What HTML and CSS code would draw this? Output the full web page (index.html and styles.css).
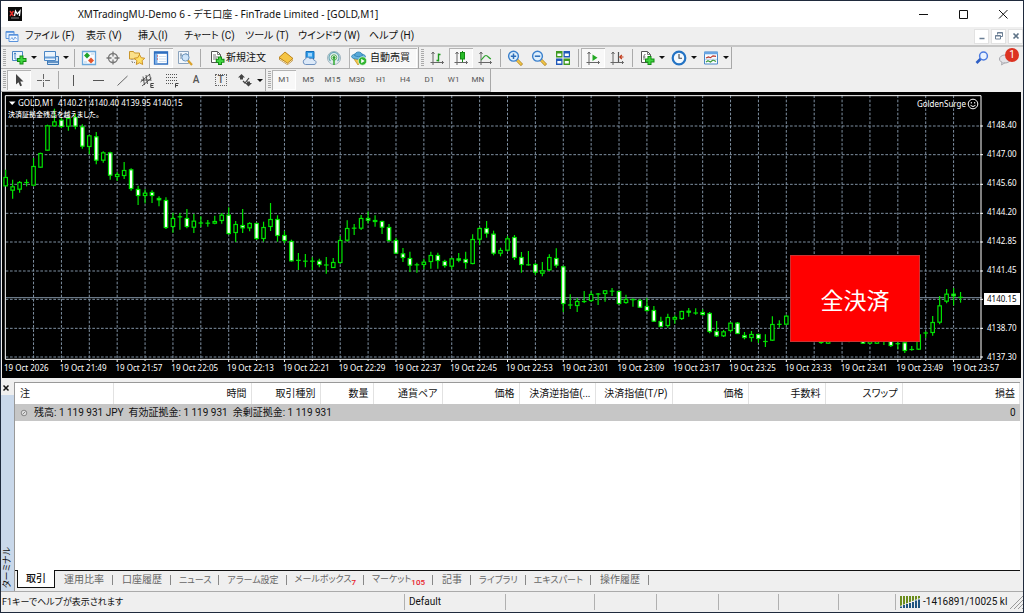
FILE: index.html
```html
<!DOCTYPE html>
<html lang="ja">
<head>
<meta charset="utf-8">
<title>XMTradingMU-Demo 6 - デモ口座 - FinTrade Limited - [GOLD,M1]</title>
<link rel="stylesheet" href="styles.css">
</head>
<body>
<div class="window">
  <header class="titlebar">
    <svg class="app-icon" viewBox="0 0 14 14"><rect width="14" height="14" fill="#0b0b0b"/><path d="M2 4l3.500 5M5.500 4L2 9" stroke="#e8302a" stroke-width="1.400"/><path d="M6.500 9l1-5 1.800 3L12 4l-.6 5" stroke="#fff" stroke-width="1.300" fill="none"/><path d="M3 11h8" stroke="#aaa" stroke-width=".8"/></svg>
    <h1 class="titlebar__text">XMTradingMU-Demo 6 - デモ口座 - FinTrade Limited - [GOLD,M1]</h1>
    <div class="caption">
      <button class="caption__btn" aria-label="最小化"><svg viewBox="0 0 12 12"><path d="M2 6.500h9" stroke="#111"/></svg></button>
      <button class="caption__btn" aria-label="最大化"><svg viewBox="0 0 12 12"><path d="M2.500 2.500h8v8h-8z" fill="none" stroke="#111"/></svg></button>
      <button class="caption__btn" aria-label="閉じる"><svg viewBox="0 0 12 12"><path d="M2 2l8.500 8.500M10.500 2L2 10.500" stroke="#111"/></svg></button>
    </div>
  </header>

  <nav class="menubar">
    <svg class="menubar__icon" viewBox="0 0 14 14"><path d="M1 2.500h8v7H1z" fill="#e4f0fd" stroke="#5a93dc"/><path d="M1 3h8" stroke="#5a93dc" stroke-width="1.600"/><path d="M4 5.500h9v7H4z" fill="#f4f9ff" stroke="#5a93dc"/><path d="M4 6h9" stroke="#5a93dc" stroke-width="1.400"/><path d="M5.500 10.500l1.500-2 1.500 2.500 1.500-3 1.500 2" fill="none" stroke="#5a93dc" stroke-width=".8"/></svg>
    <div class="menubar__items">
      <button class="menu">ファイル (F)</button><button class="menu">表示 (V)</button><button class="menu">挿入(I)</button><button class="menu">チャート (C)</button><button class="menu">ツール (T)</button><button class="menu">ウインドウ (W)</button><button class="menu">ヘルプ (H)</button>
    </div>
    <div class="mdi">
      <button class="mdi__btn" aria-label="チャートを最小化"><svg viewBox="0 0 10 10"><path d="M2.500 7.500h5" stroke="#6b7f95" stroke-width="1.500"/></svg></button>
      <button class="mdi__btn" aria-label="チャートを元に戻す"><svg viewBox="0 0 10 10"><path d="M3.500 3.500v-2h5v4h-2M3.500 2h5" fill="none" stroke="#6b7f95"/><path d="M1.500 4.500h5v3.500h-5zM1.500 5h5" fill="none" stroke="#6b7f95"/></svg></button>
      <button class="mdi__btn" aria-label="チャートを閉じる"><svg viewBox="0 0 10 10"><path d="M2.500 2.500l5 5M7.500 2.500l-5 5" stroke="#5d7286" stroke-width="1.600"/></svg></button>
    </div>
  </nav>

  <div class="toolbar">
    <div class="bar">
      <i class="grip"></i>
      <button class="tool tool--menu" aria-label="新規チャート"><svg viewBox="0 0 16 16"><path d="M1.500 1.500h10v9h-10z" fill="#eef6fe" stroke="#4a86c5"/><path d="M4 3v6h6M3 4.200l1-1.400 1 1.400" fill="none" stroke="#4a86c5"/><path d="M10.500 5.500v9M6 10h9.500" stroke="#128a12" stroke-width="4"/><path d="M10.500 6.500v7M7 10h7.500" stroke="#3fd43f" stroke-width="2.200"/></svg></button>
      <button class="tool tool--menu" aria-label="プロファイル"><svg viewBox="0 0 16 16"><path d="M4.500 6.500h11v8h-11z" fill="#cfe2f5" stroke="#3f78b5"/><path d="M4 12h11" stroke="#3f78b5" stroke-width="1.500"/><path d="M1.500 1.500h11v9h-11z" fill="#eaf4fd" stroke="#4a86c5"/><path d="M2 7.500h10" stroke="#6aa0d8" stroke-width="2"/></svg></button>
      <i class="sep"></i>
      <button class="tool" aria-label="気配値表示"><svg viewBox="0 0 16 16"><path d="M1.500 1.500h13v13h-13z" fill="#f7fbff" stroke="#6aa8dc" stroke-width="1.300"/><path d="M6 2.500l3 3-3 3-3-3z" fill="#1fa32a"/><path d="M10 7.500l3 3-3 3-3-3z" fill="#e4552b"/><path d="M10 4h3M3 12h3" stroke="#b9cde0"/></svg></button>
      <button class="tool" aria-label="データウィンドウ"><svg viewBox="0 0 16 16"><circle cx="8" cy="8" r="4.500" fill="none" stroke="#777" stroke-width="1.300"/><path d="M8 1.500v5M8 9.500v5M1.500 8h5M9.500 8h5" stroke="#777" stroke-width="1.300"/></svg></button>
      <button class="tool" aria-label="ナビゲーター"><svg viewBox="0 0 16 16"><path d="M.5 3V1.500h4L5.500 3h5v6H.5z" fill="#fbe08a" stroke="#c9962c"/><path d="M3 9v4M3 12.500h5" stroke="#888" stroke-dasharray="1 1"/><path d="M10.500 4.500l1.700 3.200 3.500.5-2.600 2.600.6 3.700-3.200-1.700-3.200 1.700.6-3.700L5.300 8.200l3.500-.5z" fill="#ffe066" stroke="#c98a1c" stroke-width=".9"/></svg></button>
      <button class="tool tool--on" aria-label="ターミナル"><svg viewBox="0 0 16 16"><path d="M1.500 2h13v12h-13z" fill="#fff" stroke="#2f6fc0" stroke-width="1.300"/><path d="M1 2.800h14" stroke="#2f6fc0" stroke-width="2"/><path d="M3.200 4v9.500" stroke="#7db0e8" stroke-width="2.600"/><path d="M6 6.500h7M6 9h7M6 11.500h7" stroke="#cfe0f2"/><path d="M4 6h1M4 9h1" stroke="#d33"/></svg></button>
      <button class="tool" aria-label="ストラテジーテスター"><svg viewBox="0 0 16 16"><path d="M1.500 1.500h10v12h-10z" fill="#f2f7fc" stroke="#8aa3bd"/><path d="M4 3v6M3 5h2M9 3v3" stroke="#7c93aa"/><circle cx="8.500" cy="7.500" r="3.600" fill="#c9e2f8" fill-opacity=".85" stroke="#6d96bf"/><path d="M11 10.500l4 4.500" stroke="#d9a12c" stroke-width="2.200"/></svg></button>
      <i class="sep"></i>
      <button class="tool tool--order"><svg viewBox="0 0 16 16"><path d="M2.500 1.500h6l3 3v8h-9z" fill="#fff" stroke="#555"/><path d="M8.500 1.500v3h3M4 5h3M4 7h5M4 9h4" fill="none" stroke="#777"/><path d="M11 6.500v8.500M6.800 10.800h8.700" stroke="#128a12" stroke-width="4"/><path d="M11 7.500v6.500M7.800 10.800h6.700" stroke="#3fd43f" stroke-width="2.200"/></svg>新規注文</button>
      <button class="tool" aria-label="MetaEditor"><svg viewBox="0 0 16 16"><path d="M1 7.500l6-5.500 8 6.500v2L9.500 15 1 9.500z" fill="#a86f10"/><path d="M1 7.500l6-5.500 8 6.500-5.500 4.700z" fill="#f5c545" stroke="#b57c16" stroke-width=".8"/><path d="M1.500 9l8 5 5.500-4.500" fill="none" stroke="#fff3c9" stroke-width=".9"/></svg></button>
      <button class="tool" aria-label="マーケット"><svg viewBox="0 0 16 16"><path d="M4 1.500h8v7H4z" fill="#2f9be6" stroke="#1770bd"/><path d="M6 3h4v3.500H6z" fill="#9fd6ff"/><path d="M3.500 14.500a2.700 2.700 0 0 1-.2-5.300C4 7 7 7 8 8.800c1.500-.9 3.500-.3 3.800 1.300 3 .2 3 4.400.2 4.400z" fill="#dce9f8" stroke="#6d91bf"/></svg></button>
      <button class="tool" aria-label="シグナル"><svg viewBox="0 0 16 16"><circle cx="8" cy="8" r="6.500" fill="#e2ecef" stroke="#9fb4bf"/><path d="M4.500 11a5 5 0 1 1 7 0" fill="none" stroke="#6aa8b5" stroke-width="1.200"/><circle cx="8" cy="7.500" r="2.700" fill="#fff" stroke="#55ad55"/><circle cx="8" cy="7.500" r="1.500" fill="#2d9c2d"/><path d="M8 8v7" stroke="#3daf3d" stroke-width="1.600"/></svg></button>
      <button class="tool tool--auto tool--on"><svg viewBox="0 0 16 16"><path d="M2 7.500l5 7.500 6-7.500z" fill="#f3c64c" stroke="#bb8b1f" stroke-width=".7"/><ellipse cx="7.500" cy="6.500" rx="7" ry="2.800" fill="#67b4e0" stroke="#2f7fae" stroke-width=".8"/><path d="M3.500 5.500C4 .8 11 .8 11.500 5.500c-2 1.500-6 1.500-8 0z" fill="#57a8d8" stroke="#2f7fae" stroke-width=".8"/><circle cx="11.500" cy="11" r="4.200" fill="#31b531" stroke="#fff" stroke-width=".6"/><path d="M10.200 8.800l3.500 2.200-3.500 2.200z" fill="#fff"/></svg>自動売買</button>
    </div>
    <div class="bar">
      <i class="grip"></i>
      <button class="tool" aria-label="バーチャート"><svg viewBox="0 0 16 16"><path d="M4 2v13M1.500 12.500h13M2.500 4L4 2l1.500 2M13 11l1.500 1.500L13 14" fill="none" stroke="#666"/><path d="M9.500 3.500v8M7.500 10.500h2M9.500 4.500h2" stroke="#1d9a1d" stroke-width="1.400"/></svg></button>
      <button class="tool tool--on" aria-label="ローソク足"><svg viewBox="0 0 16 16"><path d="M4 2v13M1.500 12.500h13M2.500 4L4 2l1.500 2M13 11l1.500 1.500L13 14" fill="none" stroke="#666"/><path d="M9.500 1v11" stroke="#158a15"/><rect x="7.500" y="2.500" width="4" height="6.500" fill="#27bb27" stroke="#158a15"/></svg></button>
      <button class="tool" aria-label="ラインチャート"><svg viewBox="0 0 16 16"><path d="M4 2v13M1.500 12.500h13M2.500 4L4 2l1.500 2M13 11l1.500 1.500L13 14" fill="none" stroke="#666"/><path d="M4 10c2-1 3-4.500 5-4.500s3 3 5 3.500" fill="none" stroke="#2fa32f" stroke-width="1.200"/></svg></button>
      <i class="sep"></i>
      <button class="tool" aria-label="ズームイン"><svg viewBox="0 0 16 16"><path d="M10 10l5 5" stroke="#a97818" stroke-width="3"/><path d="M10 10l4.600 4.600" stroke="#f0c648" stroke-width="1.800"/><circle cx="6.500" cy="6.200" r="4.900" fill="#dff0fd" stroke="#3b80cc" stroke-width="1.400"/><path d="M6.500 3.500v5.500M3.800 6.200h5.400" stroke="#2b6cb8" stroke-width="1.500"/></svg></button>
      <button class="tool" aria-label="ズームアウト"><svg viewBox="0 0 16 16"><path d="M10 10l5 5" stroke="#a97818" stroke-width="3"/><path d="M10 10l4.600 4.600" stroke="#f0c648" stroke-width="1.800"/><circle cx="6.500" cy="6.200" r="4.900" fill="#dff0fd" stroke="#3b80cc" stroke-width="1.400"/><path d="M3.800 6.200h5.400" stroke="#2b6cb8" stroke-width="1.500"/></svg></button>
      <button class="tool" aria-label="整列"><svg viewBox="0 0 16 16"><path d="M1 1h6.500v6.500H1zM8.500 8.500H15V15H8.500z" fill="#3e9a1f"/><path d="M8.500 1H15v6.500H8.500zM1 8.500h6.500V15H1z" fill="#2058b8"/><path d="M2.300 3.500h4V6h-4zM9.800 3.500h4V6h-4zM2.300 11h4v2.500h-4zM9.800 11h4v2.500h-4z" fill="#fff"/></svg></button>
      <i class="sep"></i>
      <button class="tool tool--on" aria-label="自動スクロール"><svg viewBox="0 0 16 16"><path d="M4 2v13M1.500 12.500h13M2.500 4L4 2l1.500 2M13 11l1.500 1.500L13 14" fill="none" stroke="#666"/><path d="M7.500 4.500l5 3.200-5 3.200z" fill="#22a822"/></svg></button>
      <button class="tool" aria-label="チャートシフト"><svg viewBox="0 0 16 16"><path d="M4 2v13M1.500 12.500h13M2.500 4L4 2l1.500 2M13 11l1.500 1.500L13 14" fill="none" stroke="#666"/><path d="M9.500 2v10" stroke="#555" stroke-width="1.200"/><path d="M14.500 7H11M12.800 5L10.800 7l2 2" fill="none" stroke="#c23a1a" stroke-width="1.200"/></svg></button>
      <i class="sep"></i>
      <button class="tool tool--menu" aria-label="インディケータ"><svg viewBox="0 0 16 16"><path d="M2.500 1.500h6l3 3v8h-9z" fill="#fff" stroke="#555"/><path d="M8.500 1.500v3h3M6.500 4.500q-1.500-.5-1.500 1.500v4M4 7h2.500" fill="none" stroke="#777"/><path d="M10.500 6v9M6 10.500h9.500" stroke="#128a12" stroke-width="4"/><path d="M10.500 7v7M7 10.500h7.500" stroke="#3fd43f" stroke-width="2.200"/></svg></button>
      <button class="tool tool--menu" aria-label="時間足設定"><svg viewBox="0 0 16 16"><circle cx="8" cy="8" r="6.300" fill="#f4faff" stroke="#2373c4" stroke-width="2.200"/><path d="M8 4v4.300h3" fill="none" stroke="#444" stroke-width="1.100"/></svg></button>
      <button class="tool tool--menu" aria-label="テンプレート"><svg viewBox="0 0 16 16"><path d="M1.500 2h13v12h-13z" fill="#f9fcff" stroke="#4a88c8"/><path d="M1 3h14" stroke="#69a5e2" stroke-width="2.500"/><path d="M3 8l2.500-1 2 .7L10 5.800l3 .5" fill="none" stroke="#b8362a" stroke-width="1.200"/><path d="M3 12l2-1.200L7.500 12l2.500-2 3 1.500" fill="none" stroke="#3c9a3c" stroke-width="1.200"/><path d="M2 9.300h12" stroke="#a9c4df" stroke-width=".8"/></svg></button>
    </div>
    <div class="toolbar__end">
      <button class="tool" aria-label="検索"><svg viewBox="0 0 16 16"><path d="M7 8.500L2.500 13" stroke="#2f5fc4" stroke-width="2.600"/><circle cx="9.500" cy="6" r="3.900" fill="#e9f2ff" stroke="#4c7be0" stroke-width="1.500"/></svg></button>
      <button class="tool tool--chat" aria-label="メッセージ"><svg viewBox="0 0 16 16"><ellipse cx="7" cy="9" rx="5.500" ry="4" fill="#e4e4e8" stroke="#a5a5ab"/><path d="M4 12l-.5 3 3.500-2.300" fill="#d5d5da" stroke="#a5a5ab" stroke-width=".8"/></svg><span class="badge">1</span></button>
    </div>
  </div>

  <div class="toolbar toolbar--draw">
    <div class="bar">
      <i class="grip"></i>
      <button class="tool tool--on" aria-label="カーソル"><svg viewBox="0 0 16 16"><path d="M5 2v10.500l2.500-2.300 1.700 4 1.800-.8-1.700-3.900h3.200z" fill="#444"/></svg></button>
      <button class="tool" aria-label="クロスヘア"><svg viewBox="0 0 16 16"><path d="M8.500 2v5M8.500 10v5M2 8.500h5M10 8.500h5M8 8.500h1" stroke="#666"/></svg></button>
      <i class="sep"></i>
      <div class="drawset">
        <button class="tool" aria-label="垂直線"><svg viewBox="0 0 16 16"><path d="M8.500 3v11" stroke="#555"/></svg></button>
        <button class="tool" aria-label="水平線"><svg viewBox="0 0 16 16"><path d="M3 8.500h11" stroke="#555"/></svg></button>
        <button class="tool" aria-label="トレンドライン"><svg viewBox="0 0 16 16"><path d="M3.500 13.500L13.500 4" stroke="#666"/></svg></button>
        <button class="tool" aria-label="チャネル"><svg viewBox="0 0 16 16"><path d="M1.500 10L11 2M3 14l9.500-8M4 4.500L5.500 13M7 3l1.500 9M10.500 2L12 9M2 8h9" stroke="#444" stroke-width=".9"/><path d="M14.800 11.500h-3v4h3M11.800 13.500h2.500" fill="none" stroke="#444"/></svg></button>
        <button class="tool" aria-label="フィボナッチ"><svg viewBox="0 0 16 16"><path d="M2 2.500h12M2 5.500h12M2 8.500h12M2 11.500h8" stroke="#555" stroke-dasharray="1 1"/><path d="M14.500 11.500h-3v4M11.500 13.500h2.500" fill="none" stroke="#444"/></svg></button>
        <button class="tool tool--letter" aria-label="テキスト">A</button>
        <button class="tool tool--letter" aria-label="ラベル"><span class="dotted">T</span></button>
      </div>
      <button class="tool tool--menu" aria-label="矢印"><svg viewBox="0 0 16 16"><path d="M1 5.500L4.500 2 8 5.500H6v2H3v-2z" fill="#444"/><path d="M6 9l2 2 4-5" fill="none" stroke="#444" stroke-width="1.200"/><path d="M15 11l-3.500 3.500L8 11h2V9.500h3V11z" fill="#444"/></svg></button>
    </div>
    <div class="bar bar--frames">
      <i class="grip"></i>
      <div class="frames">
        <button class="tool tool--on">M1</button><button class="tool">M5</button><button class="tool">M15</button><button class="tool">M30</button><button class="tool">H1</button><button class="tool">H4</button><button class="tool">D1</button><button class="tool">W1</button><button class="tool">MN</button>
      </div>
    </div>
  </div>

  <main class="chart">
    <div class="plot">
      <svg class="plot__svg" id="plot" viewBox="6 0 2943 810" preserveAspectRatio="none"></svg>
      <div class="plot__info"><p class="plot__quote"><svg viewBox="0 0 8 8"><path d="M1 2.500h6.500L4.200 6z" fill="#fff"/></svg>GOLD,M1&nbsp; 4140.21 4140.40 4139.95 4140.15</p><p class="plot__alert">決済証拠金残高を越えました。</p></div>
      <div class="plot__expert">GoldenSurge <svg viewBox="0 0 12 12"><circle cx="6" cy="6" r="4.800" fill="none" stroke="#fff"/><path d="M4.300 4v1.500M7.700 4v1.500M3.500 7.300q2.500 2.500 5 0" fill="none" stroke="#fff"/></svg></div>
      <button class="close-all">全決済</button>
    </div>
    <div class="prices"><span>4148.40</span><span>4147.00</span><span>4145.60</span><span>4144.20</span><span>4142.85</span><span>4141.45</span><span class="prices__now">4140.15</span><span>4138.70</span><span>4137.30</span></div>
    <div class="times"><span>19 Oct 2026</span><span>19 Oct 21:49</span><span>19 Oct 21:57</span><span>19 Oct 22:05</span><span>19 Oct 22:13</span><span>19 Oct 22:21</span><span>19 Oct 22:29</span><span>19 Oct 22:37</span><span>19 Oct 22:45</span><span>19 Oct 22:53</span><span>19 Oct 23:01</span><span>19 Oct 23:09</span><span>19 Oct 23:17</span><span>19 Oct 23:25</span><span>19 Oct 23:33</span><span>19 Oct 23:41</span><span>19 Oct 23:49</span><span>19 Oct 23:57</span></div>
  </main>

  <section class="terminal">
    <aside class="side">
      <button class="side__close" aria-label="ターミナルを閉じる"><svg viewBox="0 0 8 8"><path d="M1.500 1.500l5 5M6.500 1.500l-5 5" stroke="#111" stroke-width="1.500"/></svg></button>
      <div class="side__strip"><span class="side__label">ターミナル</span></div>
    </aside>
    <div class="panel">
      <table class="trades">
        <colgroup><col class="c-id"><col class="c-time"><col class="c-type"><col class="c-vol"><col class="c-type"><col class="c-num"><col class="c-stop"><col class="c-num"><col class="c-stop"><col class="c-num"><col class="c-num"><col></colgroup>
        <thead><tr><th>注</th><th>時間</th><th>取引種別</th><th>数量</th><th>通貨ペア</th><th>価格</th><th>決済逆指値(...</th><th>決済指値(T/P)</th><th>価格</th><th>手数料</th><th>スワップ</th><th>損益</th></tr></thead>
        <tbody><tr><td colspan="11"><svg class="bullet" viewBox="0 0 8 8"><circle cx="4" cy="4" r="2.800" fill="#ddd" stroke="#888"/><path d="M2.500 5.500l3-3" stroke="#888"/></svg>残高: 1 119 931 JPY&nbsp; 有効証拠金: 1 119 931&nbsp; 余剰証拠金: 1 119 931</td><td>0</td></tr></tbody>
      </table>
      <div class="tabs" role="tablist">
        <button class="tab tab--on" role="tab">取引</button><button class="tab" role="tab">運用比率</button><button class="tab" role="tab">口座履歴</button><button class="tab tab--kana" role="tab">ニュース</button><button class="tab tab--kana" role="tab">アラーム設定</button><button class="tab tab--kana" role="tab">メールボックス<sub>7</sub></button><button class="tab tab--kana" role="tab">マーケット<sub>105</sub></button><button class="tab" role="tab">記事</button><button class="tab tab--kana" role="tab">ライブラリ</button><button class="tab tab--kana" role="tab">エキスパート</button><button class="tab" role="tab">操作履歴</button>
      </div>
    </div>
  </section>

  <footer class="status">
    <span class="status__help">F1キーでヘルプが表示されます</span><span>Default</span><span></span><span></span><span></span><span></span><span></span><span></span>
    <span class="status__net"><svg class="signal" viewBox="0 0 20 12"><path d="M1 0v11M4 0v11M7 0v11M10 0v11M13 0v11M16 0v11M19 0v11" stroke="#6b8c1c" stroke-width="2"/><path d="M0 10L20 2v10H0z" fill="#efefef"/><path d="M1 10.500V12M4 9v3M7 8v4M10 7v5M13 6v6M16 4.500V12M19 3.500V12" stroke="#1f5580" stroke-width="2"/></svg>-1416891/10025 kl
    <svg class="resize" viewBox="0 0 14 14"><path d="M0 14L14 0M4 14L14 4M8 14l6-6M12 14l2-2" stroke="#999"/></svg></span>
  </footer>
</div>
<script src="chart.js"></script>
</body>
</html>
```
FILE: styles.css
```css
* { box-sizing: border-box; }
html, body { height: 100%; }
body {
  margin: 0;
  font: 10px/14px Roboto, "Noto Sans CJK JP", sans-serif;
  font-feature-settings: "palt";
  color: #111;
  background: #efefef;
}
button { margin: 0; padding: 0; border: 0; background: none; font: inherit; font-feature-settings: inherit; color: inherit; white-space: nowrap; }
svg { display: block; flex: none; }
p { margin: 0; }

.window { display: flex; flex-direction: column; height: 100vh; border: 1px solid #1f2a3c; background: #efefef; overflow: hidden; }

.titlebar { display: flex; align-items: center; height: 26px; padding-left: 7px; background: #fff; flex: none; }
.app-icon { width: 14px; height: 14px; }
.titlebar__text { flex: 1; margin: 0; padding-left: 56px; font-family: "Noto Sans", "Noto Sans CJK JP", sans-serif; font-size: 10px; font-weight: 400; }
.caption { display: flex; }
.caption__btn { display: flex; justify-content: center; align-items: center; width: 40px; height: 26px; }
.caption__btn svg { width: 12px; height: 12px; }

.menubar { display: flex; align-items: center; height: 18px; padding-left: 4px; flex: none; }
.menubar__icon { width: 14px; height: 14px; }
.menubar__items { flex: 1; display: grid; grid-template-columns: 61px 52px 46px 61px 53px 71px 60px; padding-left: 6px; }
.menu { text-align: left; }
.mdi { display: flex; gap: 2px; }
.mdi__btn { display: flex; align-items: center; justify-content: center; width: 15px; height: 15px; background: #fff; border: 1px solid #e2e2e2; }
.mdi__btn svg { width: 10px; height: 10px; }

.toolbar { display: flex; height: 24px; border-top: 2px solid #c6c6c6; flex: none; }
.toolbar--draw { height: 23px; border-top: 0; }
.bar { display: flex; align-items: center; padding-left: 1px; border-right: 1px solid #a8a8a8; border-bottom: 1px solid #b0b0b0; }
.grip { width: 3px; height: 18px; margin: 0 1px; background: repeating-linear-gradient(#aaa 0 1px, #efefef 1px 2px); }
.sep { width: 6px; height: 18px; background: linear-gradient(#aaa, #aaa) center / 1px 100% no-repeat; }
.tool { position: relative; display: flex; align-items: center; justify-content: center; width: 24px; height: 20px; flex: none; }
.tool svg { width: 16px; height: 16px; }
.tool--menu { width: 32px; justify-content: flex-start; padding-left: 4px; gap: 4px; }
.tool--menu::after { content: ""; border: 3px solid transparent; border-top-color: #111; border-bottom: 0; }
.tool--on { background: #f8f8f8; box-shadow: inset 1px 1px #b4b4b4, inset -1px -1px #fff; }
.tool--order { width: 71px; gap: 1px; justify-content: flex-start; padding-left: 6px; }
.tool--auto { width: 68px; margin: 0 1px 0 3px; gap: 3px; justify-content: flex-start; padding-left: 2px; }
.tool--letter { font-weight: 500; color: #555; }
.dotted { width: 12px; height: 12px; line-height: 10px; border: 1px dotted #666; }
.toolbar__end { display: flex; align-items: center; margin-left: auto; padding-right: 5px; }
.badge { position: absolute; right: -1px; top: 0; width: 14px; height: 14px; border-radius: 50%; background: #dc3322; color: #fff; line-height: 14px; text-align: center; }
.drawset, .frames { display: flex; }
.drawset { width: 172px; }
.frames { width: 218px; color: #555; font-size: 8px; }
.drawset .tool, .frames .tool { flex: 1; }
.bar--frames { padding-left: 1px; }

.chart { flex: 1; display: grid; grid-template-columns: 1fr 38px; grid-template-rows: 1fr 16px; margin: 0 2px 0 1px; background: #000; color: #fff; font-family: "Noto Sans", "Noto Sans CJK JP", sans-serif; font-size: 8px; line-height: 12px; min-height: 0; }
.plot { position: relative; min-height: 0; }
.plot__svg { position: absolute; width: 100%; height: 100%; }
.plot__info { position: absolute; left: 6px; top: 5px; }
.plot__quote { display: flex; align-items: center; gap: 2px; }
.plot__quote svg { width: 8px; height: 8px; }
.plot__alert { font-weight: 500; font-size: 7px; }
.plot__expert { position: absolute; right: 4px; top: 6px; display: flex; align-items: center; gap: 1px; }
.plot__expert svg { width: 12px; height: 12px; }
.close-all { position: absolute; right: 63px; top: 163px; width: 130px; height: 87px; background: #f00; border: 1px solid #c33; font-family: "Noto Sans CJK JP", sans-serif; font-size: 23px; font-feature-settings: normal; }
.prices { grid-row: 1 / 3; grid-column: 2; display: grid; grid-template-rows: repeat(9, 1fr); align-items: center; padding: 19px 1px 7px 1px; }
.prices span { padding-left: 3px; }
.prices__now { background: #fff; color: #000; }
.times { grid-column: 1 / 3; grid-row: 2; display: grid; grid-template-columns: repeat(18, 1fr); padding: 0 13px 0 2px; white-space: nowrap; }

.terminal { display: flex; height: 213px; padding-top: 4px; flex: none; }
.side { display: flex; flex-direction: column; width: 13px; }
.side__close { padding: 2px 0 3px 1px; }
.side__close svg { width: 8px; height: 8px; }
.side__strip { flex: 1; display: flex; align-items: flex-end; padding-bottom: 3px; background: #c9d8ea; }
.side__label { writing-mode: vertical-rl; text-orientation: sideways; transform: rotate(180deg); line-height: 13px; font-size: 9px; }
.panel { flex: 1; display: flex; flex-direction: column; margin-right: 3px; background: #fff; border-top: 1px solid #999; border-left: 1px solid #999; min-width: 0; }
.trades { width: 100%; table-layout: fixed; border-collapse: collapse; text-align: right; white-space: nowrap; }
.trades th { height: 21px; padding: 0 4px 0 0; font-weight: 400; border-right: 1px solid #e2e2e2; }
.trades th:first-child { text-align: left; padding-left: 5px; }
.trades td { height: 17px; padding: 0 4px 0 5px; background: #c6c6c6; }
.trades td:first-child { text-align: left; }
.bullet { display: inline-block; width: 8px; height: 8px; margin-right: 6px; vertical-align: -1px; }
.c-id { width: 98px; }
.c-time { width: 138px; }
.c-type { width: 69px; }
.c-vol { width: 53px; }
.c-num { width: 77px; }
.c-stop { width: 76px; }
.tabs { display: flex; height: 21px; margin-top: auto; padding-left: 2px; background: #efefef; border-top: 1px solid #111; }
.tab { height: 17px; padding: 0 9px; color: #666; background: linear-gradient(#888, #888) right 4px / 1px 10px no-repeat; }
.tab--on { margin-top: -1px; height: 18px; padding: 0 8px; background: #fff; color: #111; border: 1px solid #111; border-top: 0; font-weight: 500; }
.tab--kana { padding: 0 8px; font-size: 9px; }
.tab sub { color: #e8202a; font-size: 8px; font-weight: 500; line-height: 8px; vertical-align: -3px; }

.status { display: grid; grid-template-columns: 1fr 101px 89px 62px 62px 60px 60px 57px 128px; align-items: center; height: 21px; border-top: 1px solid #aaa; flex: none; white-space: nowrap; }
.status span { height: 16px; line-height: 16px; padding-left: 4px; border-left: 1px solid #b0b0b0; }
.status .status__help { border: 0; padding-left: 1px; font-size: 9px; }
.status .status__net { display: flex; align-items: center; gap: 3px; }
.signal { width: 20px; height: 12px; }
.resize { width: 14px; height: 14px; margin-left: auto; }
```
FILE: chart.js
```js
// Each bar: [kind, high, body top, body bottom, low]
// u = rising, d = falling, x = doji. y is measured in thirds of a pixel from `base`.
const blocks = [
  { base: 0, bars: [
    ['u',233,255,283,283],['u',263,283,296,320],['u',267,270,293,302],['x',262,271,272,283],
    ['u',198,222,281,281],['u',182,183,227,227],['u',98,100,176,176],['u',50,88,103,103],
    ['d',78,83,105,108],['u',75,78,104,116],['d',65,75,104,112],['d',97,103,164,170],
    ['u',130,130,165,187],['d',120,133,206,217],['u',178,181,206,212],['d',179,181,251,263],
    ['u',240,246,255,267],['u',210,234,252,261],['d',229,232,291,296],['d',281,291,312,339],
    ['u',292,302,312,334],['d',295,300,312,333],['d',313,318,325,343],['d',316,324,408,411],
    ['u',362,378,405,422],['x',363,373,376,413],['d',351,378,405,409],['u',366,386,407,423],
    ['x',373,392,394,405],['x',384,393,394,404],['u',371,387,395,397],['u',363,368,387,395],
    ['d',346,368,426,428],['u',387,396,423,450],['d',351,399,409,423],['u',391,393,409,418]] },
  { base: 264, bars: [
    ['d',128,129,177,180],['u',125,141,177,185],['u',69,117,141,153],['d',106,117,168,185],
    ['d',153,165,183,190],['d',179,183,244,245],['x',219,240,242,270],['x',222,243,244,262],
    ['x',232,243,244,270],['d',236,242,255,262],['x',231,254,256,281],['u',234,246,264,264],
    ['u',168,180,249,252],['u',121,144,182,185],['x',132,144,145,165],['u',105,114,146,150],
    ['d',94,114,122,130],['d',106,120,126,140],['d',122,123,143,162],['d',132,141,183,185],
    ['d',173,180,221,222],['d',204,220,234,246],['d',215,234,257,276],['x',248,254,255,278],
    ['u',236,245,255,268],['u',215,225,246,266],['d',218,225,243,266],['d',239,243,258,263],
    ['u',233,235,260,268],['d',219,235,242,247],['d',215,237,249,266],['u',163,177,252,253],
    ['u',141,144,179,195],['d',123,144,161,173],['d',152,161,221,226],['u',203,210,221,229],
    ['u',168,175,212,215],['d',165,171,234,240]] },
  { base: 384, bars: [
    ['d',96,111,135,158],['x',93,133,136,137],['d',129,132,158,165],['u',126,151,161,169],
    ['u',103,111,151,153],['d',85,114,137,143],['d',137,139,252,276],['x',223,253,257,267],
    ['u',234,243,258,276],['x',213,243,246,249],['u',214,222,243,246],['x',219,221,223,255],
    ['u',210,211,222,245],['x',204,212,215,228],['d',212,213,252,254],['u',224,237,249,251],
    ['x',235,237,241,260],['d',237,240,263,264],['d',233,258,273,275],['d',258,270,305,306],
    ['d',290,303,321,322],['u',281,291,318,323],['u',286,291,299,311],['u',272,273,297,300],
    ['d',264,272,278,290],['x',265,276,282,284],['d',268,276,285,287],['d',276,279,336,340],
    ['d',303,333,349,351],['u',330,334,349,351],['u',306,308,333,338],['d',306,308,342,342],
    ['d',336,345,354,358],['u',333,342,354,365],['d',341,342,357,369],['x',343,364,365,381],
    ['u',289,312,362,363],['x',301,312,314,323],['u',285,287,314,315]] },
  { base: 0, bars: [
    ['d',660,671,690,700],['d',680,690,720,725],['d',700,718,740,744],['u',700,715,738,742],
    ['d',715,730,753,756],['u',710,720,755,755],['u',690,700,720,735],['d',695,700,735,740],
    ['x',720,738,740,751],['d',728,738,745,748],['d',732,740,755,756],['u',735,740,755,756],
    ['u',730,742,755,756],['x',720,744,746,759],['d',735,745,762,765],['x',735,753,757,772],
    ['d',750,751,777,783],['x',762,771,774,776],['u',727,727,773,774],['x',718,722,724,738],
    ['u',672,690,723,731],['u',612,640,692,697],['u',591,605,629,634],['d',588,605,613,640],
    ['x',600,615,617,632]] }
];

const svg = document.getElementById('plot');
const draw = (tag, attrs) => {
  const el = document.createElementNS('http://www.w3.org/2000/svg', tag);
  for (const name in attrs) el.setAttribute(name, attrs[name]);
  svg.appendChild(el);
};

const left = 17, right = 2945, top0 = 10, bottom = 803;
const step = 20.91;

// Grid
const grid = { stroke: '#7f90a2', 'stroke-width': 3, 'stroke-dasharray': '8 5', fill: 'none' };
for (let i = 0; i < 34; i++) {
  const x = left + step * 4 * (i + 1);
  draw('path', { ...grid, d: `M${x} ${top0}V${bottom}` });
  draw('path', { stroke: '#fff', 'stroke-width': 3, d: `M${x} ${bottom}v${i % 2 ? 7 : 4}` });
}
for (const y of [102, 188, 277, 364, 450, 537, 622, 709, 795]) {
  draw('path', { ...grid, d: `M${left} ${y}H${right}` });
  draw('path', { stroke: '#fff', 'stroke-width': 3, d: `M${right - 4} ${y}h8` });
}

// Bid line and frame
draw('path', { stroke: '#7f90a2', 'stroke-width': 3, d: `M${left} 617H${right}` });
draw('path', { stroke: '#fff', 'stroke-width': 3, fill: 'none', d: `M${left - 1} ${top0 + 1}H${right - 20}H${right - 2}V${bottom - 1}H${left - 1}z` });

// Candles
let index = 0;
for (const { base, bars } of blocks) {
  for (const [kind, high, top, low, bottomWick] of bars) {
    const x = left + step * index++;
    const line = { stroke: '#00e400', 'stroke-width': 3.6 };
    draw('path', { ...line, d: `M${x} ${base + high}V${base + bottomWick}` });
    if (kind === 'x') {
      draw('path', { ...line, d: `M${x - 7} ${base + (top + low) / 2}h14` });
    } else {
      draw('rect', { ...line, x: x - 5.2, y: base + top + 1.5, width: 10.4, height: Math.max(low - top - 3, 2), fill: kind === 'd' ? '#fff' : '#000' });
    }
  }
}
```
